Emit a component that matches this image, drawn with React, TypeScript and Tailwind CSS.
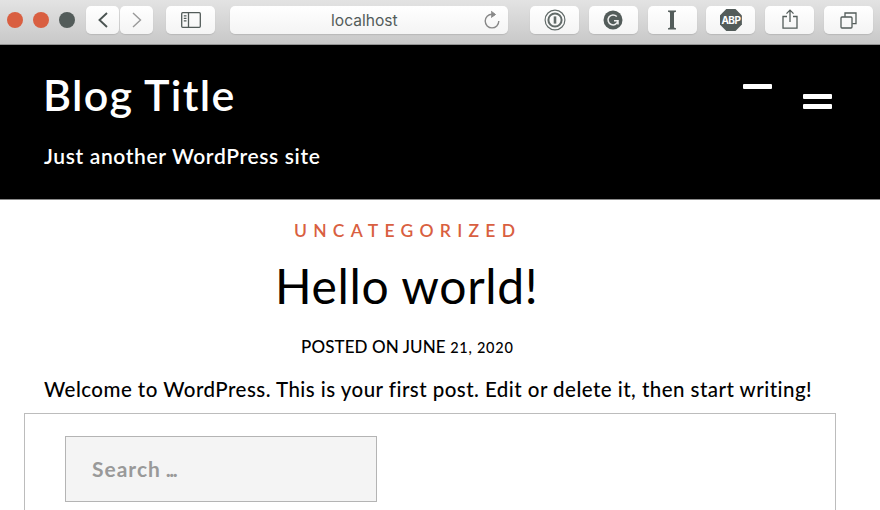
import type { ReactNode } from 'react';

function ToolButton({ className, label, children }: { className?: string; label: string; children: ReactNode }) {
  return (
    <button
      aria-label={label}
      className={`flex h-7 shrink-0 items-center justify-center rounded-[5px] bg-linear-to-b from-white to-[#f4f4f4] shadow-[0_1px_1px_#b9b9b9] ${className ?? 'w-[49px]'}`}
    >
      {children}
    </button>
  );
}

function Toolbar() {
  return (
    <div className="flex h-[45px] items-start border-b border-[#929292] bg-linear-to-b from-[#e3e3e3] to-[#c8c8c8] pt-1.5 pl-[7px] font-['Inter',sans-serif]">
      <div className="flex h-7 w-[79px] shrink-0 items-center gap-2.5">
        <span className="size-4 rounded-full bg-[#d95f41]" />
        <span className="size-4 rounded-full bg-[#d95f41]" />
        <span className="size-4 rounded-full bg-[#535c5a]" />
      </div>
      <div className="flex w-20 shrink-0 gap-px">
        <ToolButton label="Back" className="w-[33px]">
          <svg width="12" height="18" viewBox="0 0 12 18" fill="none" stroke="#4b5452" strokeWidth="1.9">
            <path d="M10 2 2.5 9l7.5 7" />
          </svg>
        </ToolButton>
        <ToolButton label="Forward" className="w-[33px]">
          <svg width="12" height="18" viewBox="0 0 12 18" fill="none" stroke="#999" strokeWidth="1.4">
            <path d="m2 2 7.5 7L2 16" />
          </svg>
        </ToolButton>
      </div>
      <ToolButton label="Sidebar">
        <svg width="20" height="16" viewBox="0 0 20 16" fill="none" stroke="#535c5a" strokeWidth="1.3">
          <rect x=".7" y=".7" width="18.6" height="14.6" rx="1" />
          <path d="M7.5 1v14M2.8 3.8h2.7M2.8 6.3h2.7M2.8 8.8h2.7" />
        </svg>
      </ToolButton>
      <div className="ml-[15px] flex h-7 w-[278px] shrink-0 items-center rounded-[5px] bg-linear-to-b from-white to-[#f4f4f4] pr-2 pl-[101px] shadow-[0_1px_1px_#b9b9b9]">
        <span className="mt-0.5 flex-1 text-[15.6px] leading-5 text-[#535c5a]">localhost</span>
        <svg width="16" height="20" viewBox="0 0 16 20" fill="none" stroke="#888" strokeWidth="1.4">
          <path d="M9.5 4.3H8a6.8 6.8 0 1 0 6.8 6.8" />
          <path d="m7.2 1.2 4.3 3.3-4.3 3" fill="#888" strokeWidth="1" />
        </svg>
      </div>
      <div className="ml-[22px] flex gap-[9.8px]">
        <ToolButton label="1Password">
          <svg width="22" height="22" viewBox="0 0 22 22" fill="none" stroke="#626b69">
            <circle cx="11" cy="11" r="9.9" strokeWidth="1.2" />
            <circle cx="11" cy="11" r="6.6" strokeWidth="2" />
            <path d="M11 7.4v7.2" strokeWidth="2.6" />
          </svg>
        </ToolButton>
        <ToolButton label="Grammarly">
          <svg width="20" height="20" viewBox="0 0 20 20" fill="none">
            <circle cx="10" cy="10" r="9.5" fill="#535c5a" />
            <path d="M13.8 6.6A5 5 0 1 0 15 10.7h-4M15 10.7v3.7" stroke="#eee" strokeWidth="1.5" />
          </svg>
        </ToolButton>
        <ToolButton label="Instapaper">
          <svg width="10" height="20" viewBox="0 0 10 20" fill="#535c5a">
            <path d="M1 0.5h8v1.3L7 2.5v15l2 .7v1.3H1v-1.3l2-.7v-15l-2-.7z" />
          </svg>
        </ToolButton>
        <ToolButton label="Adblock Plus">
          <span className="flex h-[22px] w-[22px] items-center justify-center bg-[#535c5a] text-[10px] font-bold leading-none text-white [clip-path:polygon(29%_0,71%_0,100%_29%,100%_71%,71%_100%,29%_100%,0_71%,0_29%)]">
            <span className="tracking-[-0.6px]">ABP</span>
          </span>
        </ToolButton>
        <ToolButton label="Share">
          <svg width="16" height="20" viewBox="0 0 16 20" fill="none" stroke="#535c5a" strokeWidth="1.3" className="-mt-0.5">
            <path d="M5 7.5H1v11.7h14V7.5h-4M8 13V1.2M4.5 4.6 8 1.1l3.5 3.5" />
          </svg>
        </ToolButton>
        <ToolButton label="Tabs">
          <svg width="17" height="17" viewBox="0 0 17 17" fill="none" stroke="#535c5a" strokeWidth="1.3">
            <rect x="1" y="5" width="11" height="11" rx="1" />
            <path d="M5 4.7V1h11v10.7h-3.7" />
          </svg>
        </ToolButton>
      </div>
    </div>
  );
}

function SiteHeader() {
  return (
    <header className="flex h-[155px] justify-between border-b border-[#8a8a8a] bg-black pr-12 pl-11 text-white">
      <div className="pt-[26px]">
        <h1 className="-ml-px text-[43px] leading-[48px] font-semibold tracking-[1.3px]">Blog Title</h1>
        <p className="mt-[23px] text-[21px] leading-7 font-semibold tracking-[0.64px]">Just another WordPress site</p>
      </div>
      <div className="flex items-start gap-[31px] pt-[39px]">
        <span className="h-[5px] w-[29px] rounded-[1px] bg-white" />
        <button aria-label="Menu" className="mt-2.5 flex flex-col gap-[5px]">
          <span className="h-[5px] w-[29px] rounded-[1px] bg-white" />
          <span className="h-[5px] w-[29px] rounded-[1px] bg-white" />
        </button>
      </div>
    </header>
  );
}

export default function App() {
  return (
    <div className="h-[510px] w-[880px] overflow-hidden bg-white font-['Lato',sans-serif] text-black">
      <Toolbar />
      <SiteHeader />
      <main>
        <article className="flex flex-col">
          <a className="mt-[19px] pl-[294px] text-[17.5px] leading-6 font-semibold tracking-[6.25px] text-[#d95f41]">UNCATEGORIZED</a>
          <h2 className="mt-[15px] pl-[275px] text-[48px] leading-[56px] tracking-[0.65px]">Hello world!</h2>
          <p className="mt-[21px] pl-[301px] text-[17px] leading-6 font-medium tracking-[0.1px]">
            POSTED ON JUNE <span className="text-[14.5px] tracking-[0.75px]">21, 2020</span>
          </p>
          <p className="mt-[15px] pl-11 text-[20.5px] leading-7 font-medium whitespace-nowrap tracking-[0.46px]">
            Welcome to WordPress. This is your first post. Edit or delete it, then start writing!
          </p>
        </article>
        <div className="mt-2.5 ml-6 h-[120px] w-[812px] border border-[#bcbcbc] pt-[22px] pl-10">
          <div className="flex h-[66px] w-[312px] items-center border border-[#b4b4b4] bg-[#f4f4f4] pl-[26px] text-[21px] leading-7 font-bold tracking-[1px] text-[#999]">
            Search <span className="ml-[5px] tracking-[-1.5px]">...</span>
          </div>
        </div>
      </main>
    </div>
  );
}
